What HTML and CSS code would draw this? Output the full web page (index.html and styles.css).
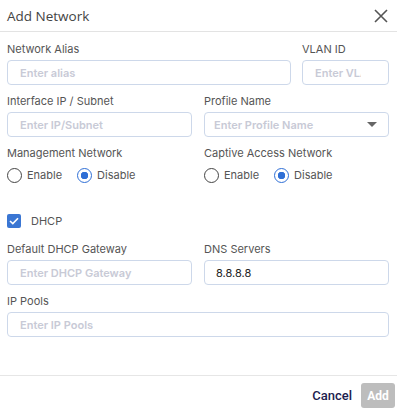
FILE: index.html
```html
<!DOCTYPE html>
<html>
<head>
    <title>Add Network</title>
    <link rel="stylesheet" href="styles.css">
</head>
<body>
    <div class="dialog">
        <div class="dialog-header">
            <h1>Add Network</h1>
            <button class="close-btn" type="button" aria-label="Close">
                <svg width="14" height="14" viewBox="0 0 14 14">
                    <path d="M1 1L13 13M13 1L1 13" stroke="#555" stroke-width="1.6" fill="none"/>
                </svg>
            </button>
        </div>
        <form class="dialog-body">
            <div class="row row-alias">
                <div class="form-group">
                    <label for="alias">Network Alias</label>
                    <input type="text" id="alias" placeholder="Enter alias">
                </div>
                <div class="form-group">
                    <label for="vlan">VLAN ID</label>
                    <input type="text" id="vlan" placeholder="Enter VLAN ID">
                </div>
            </div>
            <div class="row">
                <div class="form-group">
                    <label for="subnet">Interface IP / Subnet</label>
                    <input type="text" id="subnet" placeholder="Enter IP/Subnet">
                </div>
                <div class="form-group">
                    <label>Profile Name</label>
                    <div class="select">
                        <span class="placeholder">Enter Profile Name</span>
                        <span class="caret"></span>
                    </div>
                </div>
            </div>
            <div class="row">
                <div class="form-group">
                    <label>Management Network</label>
                    <div class="radio-group">
                        <span class="radio"><span class="dot"></span>Enable</span>
                        <span class="radio checked"><span class="dot"></span>Disable</span>
                    </div>
                </div>
                <div class="form-group">
                    <label>Captive Access Network</label>
                    <div class="radio-group">
                        <span class="radio"><span class="dot"></span>Enable</span>
                        <span class="radio checked"><span class="dot"></span>Disable</span>
                    </div>
                </div>
            </div>
            <div class="checkbox-row">
                <span class="checkbox">
                    <svg width="10" height="8" viewBox="0 0 10 8">
                        <path d="M1 4L3.8 6.6L9 1.2" stroke="#fff" stroke-width="1.6" fill="none"/>
                    </svg>
                </span>
                <span>DHCP</span>
            </div>
            <div class="row">
                <div class="form-group">
                    <label for="gateway">Default DHCP Gateway</label>
                    <input type="text" id="gateway" placeholder="Enter DHCP Gateway">
                </div>
                <div class="form-group">
                    <label for="dns">DNS Servers</label>
                    <input type="text" id="dns" value="8.8.8.8">
                </div>
            </div>
            <div class="form-group">
                <label for="pools">IP Pools</label>
                <input type="text" id="pools" placeholder="Enter IP Pools">
            </div>
        </form>
        <div class="dialog-footer">
            <button type="button" class="btn-cancel">Cancel</button>
            <button type="button" class="btn-add" disabled>Add</button>
        </div>
    </div>
</body>
</html>
```

FILE: styles.css
```css
body {
    margin: 0;
    font-family: Inter, "Noto Sans", sans-serif;
    background: #fff;
}
.dialog {
    width: 397px;
    height: 411px;
    display: flex;
    flex-direction: column;
}
.dialog-header {
    height: 31px;
    display: flex;
    align-items: center;
    justify-content: space-between;
    padding: 0 9px 0 7px;
    border-bottom: 1px solid #e3e3e3;
}
.dialog-header h1 {
    margin: 0;
    font-family: "Open Sans", sans-serif;
    font-size: 13.5px;
    font-weight: 400;
    color: #444;
}
.close-btn {
    background: none;
    border: none;
    padding: 0;
    width: 14px;
    height: 14px;
    display: flex;
}
.dialog-body {
    flex: 1;
    padding: 10px 8px 0 7px;
}
.row {
    display: grid;
    grid-template-columns: 1fr 1fr;
    column-gap: 12px;
}
.row-alias {
    grid-template-columns: 1fr 87px;
    column-gap: 11px;
}
.form-group {
    margin-bottom: 9px;
    min-width: 0;
}
label {
    display: block;
    font-size: 11px;
    line-height: 14px;
    color: #555;
    margin-bottom: 4px;
}
input[type="text"],
.select {
    box-sizing: border-box;
    width: 100%;
    height: 25px;
    border: 1px solid #cdd8ea;
    border-radius: 4px;
    padding: 0 12px;
    font-family: Inter, sans-serif;
    font-size: 11px;
    color: #222;
    outline: none;
}
input::placeholder,
.placeholder {
    color: #c8cad6;
    font-weight: 600;
}
input#vlan {
    padding-right: 27px;
}
input#dns {
    padding-left: 11px;
}
.select {
    display: flex;
    align-items: center;
    justify-content: space-between;
    padding: 0 11px 0 9px;
}
.caret {
    width: 0;
    height: 0;
    border-left: 5px solid transparent;
    border-right: 5px solid transparent;
    border-top: 5px solid #666;
}
.radio-group {
    display: flex;
    gap: 15px;
    height: 22px;
    align-items: center;
    margin-bottom: 15px;
}
.radio {
    display: flex;
    align-items: center;
    gap: 5px;
    font-size: 11px;
    color: #555;
}
.radio .dot {
    box-sizing: border-box;
    width: 15px;
    height: 15px;
    border: 1.5px solid #444;
    border-radius: 50%;
}
.radio.checked .dot {
    border-color: #2f6fd6;
    background: radial-gradient(circle, #2f6fd6 0 3.5px, #fff 4px);
}
.checkbox-row {
    display: flex;
    align-items: center;
    gap: 10px;
    height: 21px;
    font-size: 11px;
    color: #555;
    margin-bottom: 11px;
}
.checkbox {
    width: 14px;
    height: 14px;
    border-radius: 2px;
    background: #3a76d3;
    display: flex;
    align-items: center;
    justify-content: center;
}
.dialog-footer {
    border-top: 1px solid #e6e6e6;
    display: flex;
    justify-content: flex-end;
    align-items: center;
    gap: 9px;
    padding: 7px 2px 3px 0;
}
.btn-cancel {
    background: none;
    border: none;
    padding: 0;
    font-family: Roboto, sans-serif;
    font-size: 13px;
    font-weight: 500;
    color: #1c1c4f;
}
.btn-add {
    width: 34px;
    height: 25px;
    border: none;
    border-radius: 3px;
    background: #bdbdbd;
    color: #fff;
    font-family: Roboto, sans-serif;
    font-size: 12px;
    font-weight: 700;
    padding: 0;
}
```
